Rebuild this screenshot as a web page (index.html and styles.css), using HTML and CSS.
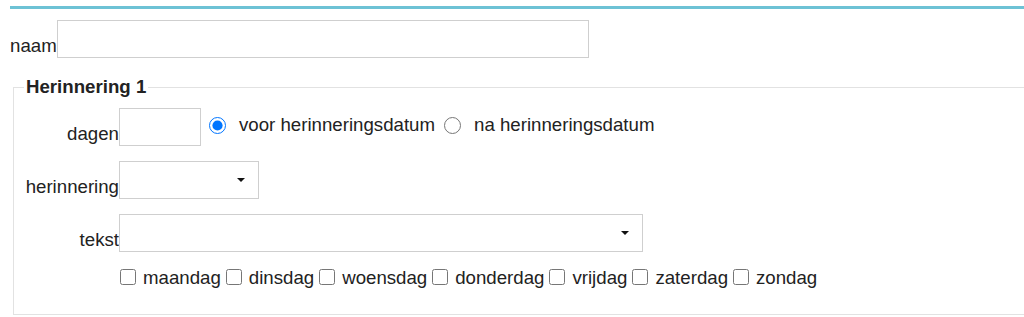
FILE: index.html
```html
<!DOCTYPE html>
<html lang="nl">
<head>
<meta charset="utf-8">
<title>Herinnering</title>
<link rel="stylesheet" href="styles.css">
</head>
<body>
<div class="page">
  <div class="topline"></div>
  <div class="naam-row">
    <label class="lbl" for="naam">naam</label>
    <input class="field naam" id="naam" type="text">
  </div>
  <fieldset class="box">
    <legend class="legend">Herinnering 1</legend>
    <div class="rows">
      <div class="row">
        <label class="lbl col" for="dagen">dagen</label>
        <input class="field dagen" id="dagen" type="text">
        <div class="radios">
          <input class="radio" type="radio" name="wanneer" id="voor" checked>
          <label class="rlabel" for="voor">voor herinneringsdatum</label>
          <input class="radio" type="radio" name="wanneer" id="na">
          <label class="rlabel" for="na">na herinneringsdatum</label>
        </div>
      </div>
      <div class="row">
        <label class="lbl col" for="herinnering">herinnering</label>
        <span class="select sel-short"><select id="herinnering"><option></option></select></span>
      </div>
      <div class="row">
        <label class="lbl col" for="tekst">tekst</label>
        <span class="select sel-long"><select id="tekst"><option></option></select></span>
      </div>
      <div class="days">
        <input class="check" type="checkbox" id="d1"><label class="dlabel" for="d1">maandag</label>
        <input class="check" type="checkbox" id="d2"><label class="dlabel" for="d2">dinsdag</label>
        <input class="check" type="checkbox" id="d3"><label class="dlabel" for="d3">woensdag</label>
        <input class="check" type="checkbox" id="d4"><label class="dlabel" for="d4">donderdag</label>
        <input class="check" type="checkbox" id="d5"><label class="dlabel" for="d5">vrijdag</label>
        <input class="check" type="checkbox" id="d6"><label class="dlabel" for="d6">zaterdag</label>
        <input class="check" type="checkbox" id="d7"><label class="dlabel" for="d7">zondag</label>
      </div>
    </div>
  </fieldset>
</div>
</body>
</html>
```
FILE: styles.css
```css
html, body {
  margin: 0;
  padding: 0;
  background: #fff;
  overflow: hidden;
}
body {
  font-family: "Liberation Sans", Arial, sans-serif;
  font-size: 18.67px;
  color: #222;
}
.page {
  padding: 6px 0 0 10px;
}
.topline {
  height: 3px;
  background: #6dc2d5;
}
.naam-row {
  display: flex;
  align-items: flex-end;
  margin-top: 11px;
}
.lbl {
  line-height: 22px;
  margin-bottom: 1px;
}
.field {
  box-sizing: border-box;
  height: 38px;
  margin: 0;
  border: 1px solid #cfcfcf;
  border-radius: 0;
  background: #fff;
  font: inherit;
  padding: 0 8px;
  outline: none;
}
.naam {
  width: 532px;
}
.box {
  margin: 18px -40px 0 3px;
  padding: 0 0 25px 0;
  border: 1px solid #e2e2e2;
  min-width: 0;
}
.legend {
  margin-left: 10px;
  padding: 0 2px;
  font-weight: bold;
  line-height: 22px;
}
.rows {
  display: flex;
  flex-direction: column;
  gap: 15px;
  padding-top: 10px;
}
.row {
  display: flex;
  align-items: flex-end;
}
.col {
  width: 105px;
  text-align: right;
  flex: none;
}
.dagen {
  width: 82px;
}
.radios {
  display: flex;
  align-items: center;
  align-self: center;
  margin-left: 8px;
  margin-top: -4px;
}
.radio {
  width: 17px;
  height: 17px;
  margin: 0;
}
.rlabel {
  margin: 0 9px 0 13px;
  line-height: 22px;
}
.select {
  position: relative;
  display: block;
  height: 38px;
}
.select select {
  box-sizing: border-box;
  width: 100%;
  height: 38px;
  margin: 0;
  border: 1px solid #cfcfcf;
  border-radius: 0;
  background: #fff;
  font: inherit;
  -webkit-appearance: none;
  appearance: none;
  outline: none;
}
.select::after {
  content: "";
  position: absolute;
  right: 14px;
  top: 17px;
  border-left: 4px solid transparent;
  border-right: 4px solid transparent;
  border-top: 4px solid #111;
}
.sel-short {
  width: 140px;
}
.sel-long {
  width: 524px;
}
.days {
  display: flex;
  align-items: center;
  padding-left: 106px;
  margin-top: -3px;
}
.check {
  width: 16px;
  height: 16px;
  margin: 0;
}
.dlabel {
  line-height: 22px;
  margin: 3px 5px 0 7px;
}
```
